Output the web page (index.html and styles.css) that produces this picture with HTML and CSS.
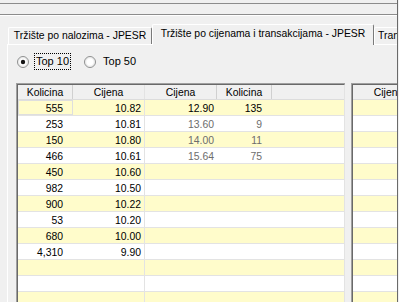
FILE: index.html
```html
<!DOCTYPE html>
<html>
<head>
<meta charset="utf-8">
<link rel="stylesheet" href="styles.css">
</head>
<body>
<div class="window">
  <div class="topstrip"></div>
  <div class="band"></div>
  <div class="hl"></div>
  <div class="tabctl">
    <div class="tabstrip">
      <div class="tab t1">Tržište po nalozima - JPESR</div>
      <div class="tab sel t2">Tržište po cijenama i transakcijama - JPESR</div>
      <div class="tab t3">Transakcije</div>
    </div>
    <div class="panel">
      <div class="radios">
        <svg class="radio" width="12" height="12" viewBox="0 0 12 12"><circle cx="6" cy="6" r="5.5" fill="#f4f4f4" stroke="#8e8f8f"/><circle cx="6" cy="6" r="4.2" fill="#fff" stroke="#dcdcdc" stroke-width="0.6"/><circle cx="6" cy="6" r="2.2" fill="#151515"/></svg>
        <span class="label focus">Top 10</span>
        <svg class="radio r2" width="12" height="12" viewBox="0 0 12 12"><circle cx="6" cy="6" r="5.5" fill="#f4f4f4" stroke="#8e8f8f"/><circle cx="6" cy="6" r="4.2" fill="#fff" stroke="#dcdcdc" stroke-width="0.6"/></svg>
        <span class="label">Top 50</span>
      </div>
      <div class="grids">
        <div class="grid main">
          <div class="inner">
            <div class="row head">
              <div class="c k">Kolicina</div>
              <div class="c p">Cijena</div>
              <div class="c p">Cijena</div>
              <div class="c k">Kolicina</div>
              <div class="c f"></div>
            </div>
            <div class="row y">
              <div class="c k cur">555</div><div class="c p">10.82</div><div class="c p">12.90</div><div class="c k">135</div><div class="c f"></div>
            </div>
            <div class="row">
              <div class="c k">253</div><div class="c p">10.81</div><div class="c p g">13.60</div><div class="c k g">9</div><div class="c f"></div>
            </div>
            <div class="row y">
              <div class="c k">150</div><div class="c p">10.80</div><div class="c p g">14.00</div><div class="c k g">11</div><div class="c f"></div>
            </div>
            <div class="row">
              <div class="c k">466</div><div class="c p">10.61</div><div class="c p g">15.64</div><div class="c k g">75</div><div class="c f"></div>
            </div>
            <div class="row y">
              <div class="c k">450</div><div class="c p">10.60</div><div class="c p"></div><div class="c k"></div><div class="c f"></div>
            </div>
            <div class="row">
              <div class="c k">982</div><div class="c p">10.50</div><div class="c p"></div><div class="c k"></div><div class="c f"></div>
            </div>
            <div class="row y">
              <div class="c k">900</div><div class="c p">10.22</div><div class="c p"></div><div class="c k"></div><div class="c f"></div>
            </div>
            <div class="row">
              <div class="c k">53</div><div class="c p">10.20</div><div class="c p"></div><div class="c k"></div><div class="c f"></div>
            </div>
            <div class="row y">
              <div class="c k">680</div><div class="c p">10.00</div><div class="c p"></div><div class="c k"></div><div class="c f"></div>
            </div>
            <div class="row">
              <div class="c k">4,310</div><div class="c p">9.90</div><div class="c p"></div><div class="c k"></div><div class="c f"></div>
            </div>
            <div class="row y">
              <div class="c k"></div><div class="c p"></div><div class="c p"></div><div class="c k"></div><div class="c f"></div>
            </div>
            <div class="row">
              <div class="c k"></div><div class="c p"></div><div class="c p"></div><div class="c k"></div><div class="c f"></div>
            </div>
            <div class="row y">
              <div class="c k"></div><div class="c p"></div><div class="c p"></div><div class="c k"></div><div class="c f"></div>
            </div>
          </div>
        </div>
        <div class="grid side">
          <div class="inner">
            <div class="row head"><div class="c p">Cijena</div></div>
            <div class="row y"><div class="c p"></div></div>
            <div class="row"><div class="c p"></div></div>
            <div class="row y"><div class="c p"></div></div>
            <div class="row"><div class="c p"></div></div>
            <div class="row y"><div class="c p"></div></div>
            <div class="row"><div class="c p"></div></div>
            <div class="row y"><div class="c p"></div></div>
            <div class="row"><div class="c p"></div></div>
            <div class="row y"><div class="c p"></div></div>
            <div class="row"><div class="c p"></div></div>
            <div class="row y"><div class="c p"></div></div>
            <div class="row"><div class="c p"></div></div>
            <div class="row y"><div class="c p"></div></div>
          </div>
        </div>
      </div>
    </div>
  </div>
</div>
</body>
</html>
```

FILE: styles.css
```css
html, body {
  margin: 0;
  padding: 0;
}
body {
  background: #f0f0f0;
  font-family: "Liberation Sans", Arial, sans-serif;
  font-size: 10.4px;
  color: #000;
  width: 399px;
  height: 302px;
  overflow: hidden;
}
.window {
  width: 397px;
  height: 302px;
  border-right: 1px solid #6a6a6a;
  overflow: hidden;
}
.topstrip {
  height: 3px;
  border-bottom: 1px solid #8c8c8c;
}
.band {
  height: 10px;
  border-bottom: 1px solid #8c8c8c;
}
.hl {
  height: 1px;
  background: #ffffff;
}
.tabctl {
  padding-top: 8px;
}
.tabstrip {
  display: flex;
  align-items: flex-end;
  height: 20px;
  padding-left: 8px;
  position: relative;
  z-index: 2;
}
.tab {
  box-sizing: border-box;
  height: 17px;
  line-height: 15px;
  border-top: 1px solid #ffffff;
  border-left: 1px solid #ffffff;
  border-right: 1px solid #7a7a7a;
  border-top-left-radius: 2px;
  border-top-right-radius: 2px;
  background: #f0f0f0;
  white-space: nowrap;
  text-align: center;
  flex: none;
}
.t1 {
  width: 144px;
}
.sel {
  height: 21px;
  margin-bottom: -1px;
  line-height: 17px;
}
.t2 {
  width: 222px;
}
.t3 {
  width: 80px;
  text-align: left;
  padding-left: 3px;
}
.panel {
  margin-left: 7px;
  border-top: 1px solid #ffffff;
  border-left: 1px solid #ffffff;
  height: 260px;
}
.radios {
  display: flex;
  align-items: center;
  height: 17px;
  margin-top: 8px;
  padding-left: 9px;
}
.radio {
  flex: none;
  margin-top: 1px;
}
.label {
  box-sizing: border-box;
  height: 17px;
  line-height: 15px;
  padding: 0 1px;
  margin-left: 5px;
  border: 1px solid transparent;
  font-size: 11px;
}
.focus {
  border: 1px dotted #000;
}
.r2 {
  margin-left: 13px;
}
.grids {
  display: flex;
  margin-top: 13px;
  padding-left: 8px;
}
.grid {
  flex: none;
  border-top: 1px solid #a0a0a0;
  border-left: 1px solid #a0a0a0;
}
.inner {
  border-top: 1px solid #696969;
  border-left: 1px solid #696969;
}
.main .inner {
  border-right: 1px solid #e3e3e3;
}
.main {
  width: 328px;
}
.side {
  margin-left: 6px;
  width: 80px;
}
.row {
  display: flex;
  height: 16px;
  box-sizing: border-box;
  border-bottom: 1px solid #e3e3e3;
  background: #ffffff;
}
.row.y {
  background: #fffccb;
}
.row.head {
  height: 15px;
  background: #f0f0f0;
  border-bottom: 1px solid #dcdcdc;
}
.c {
  box-sizing: border-box;
  flex: none;
  height: 15px;
  line-height: 15px;
  padding-top: 1px;
  text-align: right;
  white-space: nowrap;
  overflow: hidden;
}
.c.k {
  width: 55px;
  padding-right: 10px;
}
.c.p {
  width: 72px;
  padding-right: 3px;
}
.c.f {
  width: 71px;
}
.row .c.p:nth-child(2) {
  border-right: 1px solid #e3e3e3;
}
.head .c {
  height: 14px;
  line-height: 14px;
  padding: 1px 0 0 0;
  text-align: center;
  border-right: 1px solid #d0d0d0;
}
.head .c.f {
  border-right: none;
}
.side .head .c {
  border-right: 1px solid #d0d0d0;
}
.g {
  color: #6d6d6d;
}
.cur {
  box-shadow: inset 0 0 0 1px #dedede;
}
```
